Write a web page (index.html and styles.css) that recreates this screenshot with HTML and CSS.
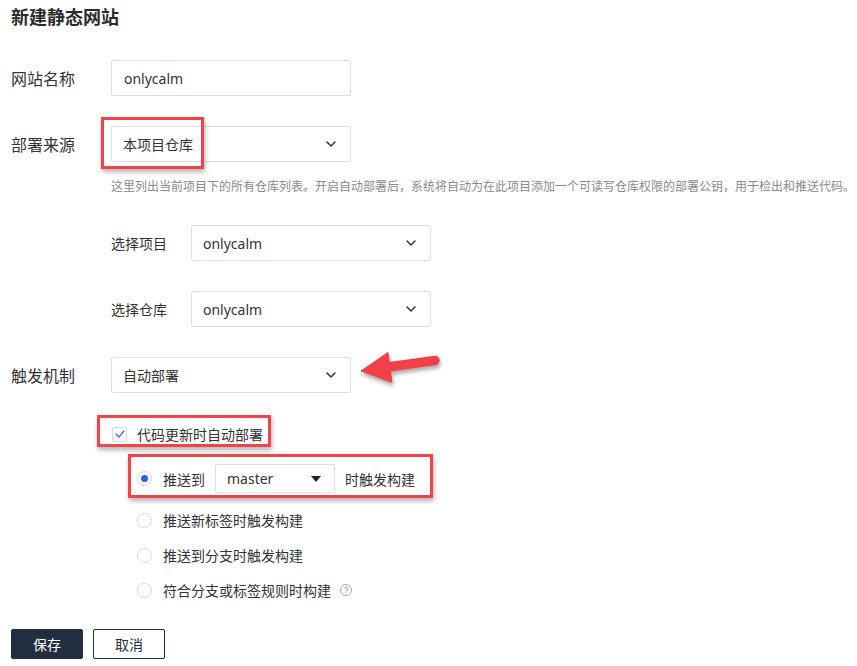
FILE: index.html
```html
<!DOCTYPE html>
<html lang="zh-CN">
<head>
<meta charset="utf-8">
<title>新建静态网站</title>
<link rel="stylesheet" href="styles.css">
</head>
<body>
<div class="page">
  <h1 class="title">新建静态网站</h1>

  <div class="row r1">
    <span class="label">网站名称</span>
    <div class="field input">onlycalm</div>
  </div>

  <div class="row r2">
    <span class="label">部署来源</span>
    <div class="field select">
      <span>本项目仓库</span>
      <svg class="chev" width="10" height="6" viewBox="0 0 10 6"><path d="M1 1l4 4 4-4" fill="none" stroke="#333" stroke-width="1.5" stroke-linecap="round" stroke-linejoin="round"/></svg>
      <span class="mark"></span>
    </div>
  </div>

  <p class="help">这里列出当前项目下的所有仓库列表。开启自动部署后，系统将自动为在此项目添加一个可读写仓库权限的部署公钥，用于检出和推送代码。</p>

  <div class="subrow s1">
    <span class="sublabel">选择项目</span>
    <div class="field select">
      <span>onlycalm</span>
      <svg class="chev" width="10" height="6" viewBox="0 0 10 6"><path d="M1 1l4 4 4-4" fill="none" stroke="#333" stroke-width="1.5" stroke-linecap="round" stroke-linejoin="round"/></svg>
    </div>
  </div>

  <div class="subrow s2">
    <span class="sublabel">选择仓库</span>
    <div class="field select">
      <span>onlycalm</span>
      <svg class="chev" width="10" height="6" viewBox="0 0 10 6"><path d="M1 1l4 4 4-4" fill="none" stroke="#333" stroke-width="1.5" stroke-linecap="round" stroke-linejoin="round"/></svg>
    </div>
  </div>

  <div class="row r3">
    <span class="label">触发机制</span>
    <div class="field select">
      <span>自动部署</span>
      <svg class="chev" width="10" height="6" viewBox="0 0 10 6"><path d="M1 1l4 4 4-4" fill="none" stroke="#333" stroke-width="1.5" stroke-linecap="round" stroke-linejoin="round"/></svg>
    </div>
  </div>

  <div class="check-wrap">
    <div class="annot check-row">
      <span class="checkbox">
        <svg width="10" height="8" viewBox="0 0 10 8"><path d="M1 4l3 3 5-6" fill="none" stroke="#3a64e8" stroke-width="1.2" stroke-linecap="round" stroke-linejoin="round"/></svg>
      </span>
      <span class="check-text">代码更新时自动部署</span>
    </div>
  </div>

  <div class="radio-wrap">
    <div class="annot radio-first">
      <span class="radio on"></span>
      <span class="rtext">推送到</span>
      <div class="mini-select">
        <span>master</span>
        <span class="caret"></span>
      </div>
      <span class="rtext">时触发构建</span>
    </div>
  </div>

  <ul class="radios">
    <li><span class="radio"></span><span class="rtext">推送新标签时触发构建</span></li>
    <li><span class="radio"></span><span class="rtext">推送到分支时触发构建</span></li>
    <li><span class="radio"></span><span class="rtext">符合分支或标签规则时构建</span><span class="qicon">?</span></li>
  </ul>

  <div class="actions">
    <button class="btn primary">保存</button>
    <button class="btn ghost">取消</button>
  </div>

  <svg class="arrow" width="100" height="60" viewBox="350 340 100 60">
    <defs>
      <filter id="sh" x="-20%" y="-30%" width="150%" height="180%">
        <feDropShadow dx="1" dy="3" stdDeviation="2" flood-color="#000" flood-opacity="0.35"/>
      </filter>
    </defs>
    <g filter="url(#sh)" fill="#f2404a" stroke="#f2404a">
      <line x1="388" y1="367" x2="435" y2="360.5" stroke-width="9.5" stroke-linecap="round"/>
      <polygon points="361,371 388,352.5 392,382.5" stroke-width="1" stroke-linejoin="round"/>
    </g>
  </svg>
</div>
</body>
</html>
```

FILE: styles.css
```css
* { box-sizing: border-box; }

html, body {
  margin: 0;
  padding: 0;
  background: #fff;
}

body {
  font-family: "Noto Sans", "Noto Sans CJK SC", sans-serif;
  color: #333;
  font-size: 14px;
}

.page {
  position: relative;
  width: 857px;
  height: 666px;
  padding-left: 11px;
  overflow: hidden;
}

.title {
  margin: 0;
  font-size: 18px;
  font-weight: 700;
  line-height: 33px;
  color: #2b2b2b;
  font-family: "Noto Sans CJK SC", sans-serif;
}

.row {
  display: flex;
  align-items: center;
  height: 36px;
}

.r1 { margin-top: 27px; }
.r2 { margin-top: 30px; }
.r3 { margin-top: 30px; }

.label {
  width: 100px;
  font-size: 16px;
  color: #333;
  font-family: "Noto Sans CJK SC", sans-serif;
}

.field {
  position: relative;
  width: 240px;
  height: 36px;
  border: 1px solid #dcdfe6;
  border-radius: 2px;
  display: flex;
  align-items: center;
  padding: 0 14px 0 11px;
  font-size: 14px;
  color: #333;
  background: #fff;
}

.input { padding-left: 12px; }

.select { justify-content: space-between; }

.chev { display: block; }

.mark {
  position: absolute;
  left: -11px;
  top: -10px;
  width: 103px;
  height: 52px;
  border: 3px solid #f2424b;
  box-shadow: 1px 3px 5px rgba(0, 0, 0, 0.3);
}

.help {
  margin: 14px 0 0 100px;
  font-size: 12px;
  line-height: 20px;
  color: #8a8a8a;
  white-space: nowrap;
  font-family: "Noto Sans CJK SC", sans-serif;
}

.subrow {
  display: flex;
  align-items: center;
  height: 36px;
  margin-left: 100px;
}

.s1 { margin-top: 29px; }
.s2 { margin-top: 30px; }

.sublabel {
  width: 80px;
  font-size: 14px;
  color: #333;
  font-family: "Noto Sans CJK SC", sans-serif;
}

.annot {
  display: inline-flex;
  align-items: center;
  border: 3px solid #f2424b;
  box-shadow: 1px 3px 5px rgba(0, 0, 0, 0.3);
}

.check-wrap {
  margin-top: 22px;
  margin-left: 86px;
  height: 32px;
}

.check-row {
  height: 32px;
  padding: 6px 5px 0 12px;
}

.checkbox {
  width: 15px;
  height: 15px;
  border: 1px solid #d4d8e0;
  border-radius: 2px;
  display: inline-flex;
  align-items: center;
  justify-content: center;
  margin-right: 10px;
  background: #fff;
}

.checkbox svg { display: block; }

.check-text {
  font-size: 14px;
  line-height: 20px;
  font-family: "Noto Sans CJK SC", sans-serif;
}

.radio-wrap {
  margin-top: 7px;
  margin-left: 117px;
  height: 44px;
}

.radio-first {
  height: 44px;
  padding: 7px 15px 2px 6px;
}

.radio {
  width: 15px;
  height: 15px;
  border: 1px solid #d4d8e0;
  border-radius: 50%;
  display: inline-block;
  position: relative;
  margin-right: 11px;
  flex: none;
  background: #fff;
}

.radio.on::after {
  content: "";
  position: absolute;
  left: 3px;
  top: 3px;
  width: 7px;
  height: 7px;
  border-radius: 50%;
  background: #2f5ee8;
}

.rtext {
  font-size: 14px;
  line-height: 20px;
  color: #333;
  font-family: "Noto Sans CJK SC", sans-serif;
}

.mini-select {
  width: 120px;
  height: 29px;
  border: 1px solid #dcdfe6;
  border-radius: 2px;
  margin: 0 10px;
  display: flex;
  align-items: center;
  justify-content: space-between;
  padding: 0 13px 0 11px;
  font-size: 14px;
  color: #333;
}

.caret {
  width: 0;
  height: 0;
  border-left: 5px solid transparent;
  border-right: 5px solid transparent;
  border-top: 6px solid #222;
}

.radios {
  list-style: none;
  margin: 12px 0 0 126px;
  padding: 0;
}

.radios li {
  display: flex;
  align-items: center;
  height: 20px;
  margin-bottom: 15px;
}

.radios li:last-child { margin-bottom: 0; }

.qicon {
  width: 12px;
  height: 12px;
  border: 1px solid #a8a8a8;
  border-radius: 50%;
  margin-left: 9px;
  font-size: 9px;
  line-height: 10px;
  text-align: center;
  color: #999;
  font-family: "Liberation Sans", sans-serif;
}

.actions {
  display: flex;
  gap: 10px;
  margin-top: 29px;
}

.btn {
  width: 72px;
  height: 30px;
  border-radius: 2px;
  font-size: 14px;
  font-family: "Noto Sans CJK SC", sans-serif;
  padding: 0;
  cursor: pointer;
}

.primary {
  background: #222d40;
  border: 1px solid #222d40;
  color: #fff;
}

.ghost {
  background: #fff;
  border: 1px solid #222d40;
  color: #222d40;
}

.arrow {
  position: absolute;
  left: 350px;
  top: 340px;
  overflow: visible;
}
```
